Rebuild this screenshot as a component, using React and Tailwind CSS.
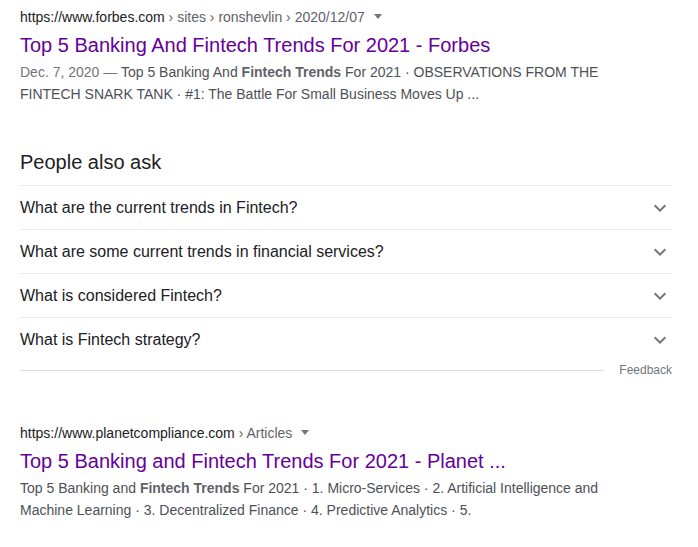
import React from "react";

const Chevron = () => (
  <svg width="24" height="24" viewBox="0 0 24 24" className="shrink-0">
    <path d="M16.59 8.59L12 13.17 7.41 8.59 6 10l6 6 6-6z" fill="#70757a" />
  </svg>
);

const Tri = () => (
  <span className="inline-block ml-[9px] align-middle w-0 h-0 border-l-[4px] border-r-[4px] border-t-[5px] border-l-transparent border-r-transparent border-t-[#70757a] relative top-[-2px]" />
);

const questions = [
  "What are the current trends in Fintech?",
  "What are some current trends in financial services?",
  "What is considered Fintech?",
  "What is Fintech strategy?",
];

export default function App() {
  return (
    <div
      className="w-[698px] h-[547px] bg-white overflow-hidden pl-5 pt-[6px]"
      style={{ fontFamily: '"Liberation Sans", Arial, sans-serif' }}
    >
      <div className="w-[652px]">
        {/* Result 1 */}
        <div className="text-[14px] leading-[22px] text-[#202124]">
          https://www.forbes.com
          <span className="text-[#5f6368]"> › sites › ronshevlin › 2020/12/07</span>
          <Tri />
        </div>
        <div className="mt-1 text-[20px] leading-[26px] text-[#660099]">
          Top 5 Banking And Fintech Trends For 2021 - Forbes
        </div>
        <div className="mt-[3px] text-[14px] leading-[22px] text-[#4d5156] w-[600px]">
          <span className="text-[#70757a]">Dec. 7, 2020 — </span>
          Top 5 Banking And <b className="font-bold text-[#5f6368]">Fintech Trends</b> For 2021 · OBSERVATIONS FROM THE FINTECH SNARK TANK · #1: The Battle For Small Business Moves Up ...
        </div>

        {/* People also ask */}
        <div className="mt-[44px] text-[20px] leading-[26px] text-[#202124] pb-[10px]">
          People also ask
        </div>
        <div>
          {questions.map((q) => (
            <div
              key={q}
              className="h-[44px] border-t border-[#ebebeb] flex items-center justify-between text-[16px] text-[#202124]"
            >
              <span>{q}</span>
              <Chevron />
            </div>
          ))}
        </div>
        <div className="h-[18px] flex items-center">
          <div className="flex-1 border-t border-[#dadce0]" />
          <span className="ml-[15px] text-[12px] text-[#70757a]">Feedback</span>
        </div>

        {/* Result 2 */}
        <div className="mt-[43px] text-[14px] leading-[22px] text-[#202124]">
          https://www.planetcompliance.com
          <span className="text-[#5f6368]"> › Articles</span>
          <Tri />
        </div>
        <div className="mt-1 text-[20px] leading-[26px] text-[#660099]">
          Top 5 Banking and Fintech Trends For 2021 - Planet ...
        </div>
        <div className="mt-[3px] text-[14px] leading-[22px] text-[#4d5156] w-[600px]">
          Top 5 Banking and <b className="font-bold text-[#5f6368]">Fintech Trends</b> For 2021 · 1. Micro-Services · 2. Artificial Intelligence and Machine Learning · 3. Decentralized Finance · 4. Predictive Analytics · 5.
        </div>
      </div>
    </div>
  );
}
